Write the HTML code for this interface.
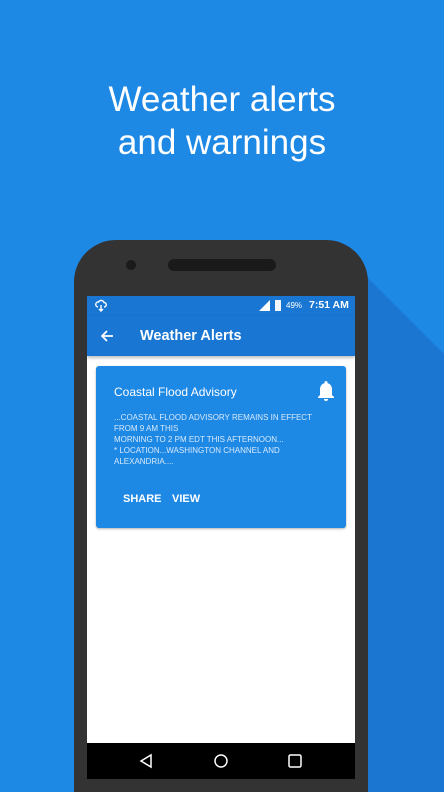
<!DOCTYPE html>
<html><head><style>
*{margin:0;padding:0;box-sizing:border-box}
html,body{width:444px;height:792px;overflow:hidden}
body{background:#1e88e5;font-family:"Liberation Sans",sans-serif;position:relative}
.title{position:absolute;top:78px;left:0;width:444px;text-align:center;color:#fff;font-size:35px;line-height:43px}
.shadow{position:absolute;left:0;top:0;width:444px;height:792px}
.phone{position:absolute;left:74px;top:240px;width:294px;height:552px;background:#333;border-radius:42px 42px 0 0}
.cam{position:absolute;left:126px;top:260px;width:10px;height:10px;border-radius:50%;background:#1a1a1a}
.spk{position:absolute;left:168px;top:259px;width:108px;height:12px;border-radius:6px;background:#1a1a1a}
.screen{position:absolute;left:87px;top:296px;width:268px;height:483px;background:#fff;overflow:hidden}
.status{height:20px;background:#1976d2;color:#fff;font-size:9px;position:relative}
.appbar{height:40px;background:#1976d2;color:#fff;position:relative;box-shadow:0 2px 3px rgba(0,0,0,.25)}
.card{position:absolute;left:9px;top:70px;width:250px;height:162px;background:#1e88e5;border-radius:3px;box-shadow:0 1px 2px rgba(0,0,0,.3);color:#fff}
.nav{position:absolute;left:0;bottom:0;width:268px;height:36px;background:#000}
</style></head><body>
<svg class="shadow" width="444" height="792"><polygon points="330,240 444,354 444,792 330,792" fill="#1b76d1"/></svg>
<div class="title">Weather alerts<br>and warnings</div>
<div class="phone"></div>
<div class="cam"></div><div class="spk"></div>
<div class="screen">
 <div class="status">
  <svg style="position:absolute;left:8px;top:3px" width="12" height="13" viewBox="0 0 12 13"><path d="M3 8a2.5 2.5 0 0 1 .5-5A3 3 0 0 1 9 3.5a2.2 2.2 0 0 1 0 4.5M6 6v6M4 10l2 2 2-2" fill="none" stroke="#fff" stroke-width="1.4"/></svg>
  <svg style="position:absolute;left:172px;top:4px" width="11" height="11"><polygon points="11,0 11,11 0,11" fill="#fff"/></svg>
  <div style="position:absolute;left:188px;top:4px;width:6px;height:11px;background:#fff;opacity:.95"></div>
  <span style="position:absolute;left:199px;top:5px;font-size:8px">49%</span>
  <span style="position:absolute;left:222px;top:3px;font-size:10.5px;font-weight:bold">7:51 AM</span>
 </div>
 <div class="appbar">
  <svg style="position:absolute;left:13px;top:13px" width="14" height="14" viewBox="0 0 14 14"><path d="M13 7H2M7 2L2 7l5 5" fill="none" stroke="#fff" stroke-width="1.8"/></svg>
  <span style="position:absolute;left:53px;top:12px;font-size:14.5px;font-weight:bold">Weather Alerts</span>
 </div>
 <div class="card">
  <div style="position:absolute;left:18px;top:19px;font-size:12px">Coastal Flood Advisory</div>
  <svg style="position:absolute;left:221px;top:14px" width="18" height="22" viewBox="0 0 18 22"><path d="M9 1a1.5 1.5 0 0 1 1.5 1.5v.6A6 6 0 0 1 15 9v6l2 2v1H1v-1l2-2V9a6 6 0 0 1 4.5-5.9v-.6A1.5 1.5 0 0 1 9 1zM7 19h4a2 2 0 0 1-4 0z" fill="#fff"/></svg>
  <div style="position:absolute;left:18px;top:46px;font-size:8px;line-height:11px;color:#d8eafb;white-space:nowrap">...COASTAL FLOOD ADVISORY REMAINS IN EFFECT<br>FROM 9 AM THIS<br>MORNING TO 2 PM EDT THIS AFTERNOON...<br>* LOCATION...WASHINGTON CHANNEL AND<br>ALEXANDRIA....</div>
  <div style="position:absolute;left:27px;top:127px;font-size:11px;font-weight:bold">SHARE</div>
  <div style="position:absolute;left:76px;top:127px;font-size:11px;font-weight:bold">VIEW</div>
 </div>
 <div class="nav">
  <svg width="268" height="36"><polygon points="54,18 64,12 64,24" fill="none" stroke="#fff" stroke-width="1.5"/><circle cx="134" cy="18" r="6" fill="none" stroke="#fff" stroke-width="1.5"/><rect x="202" y="12" width="12" height="12" rx="1.5" fill="none" stroke="#fff" stroke-width="1.5"/></svg>
 </div>
</div>
</body></html>
